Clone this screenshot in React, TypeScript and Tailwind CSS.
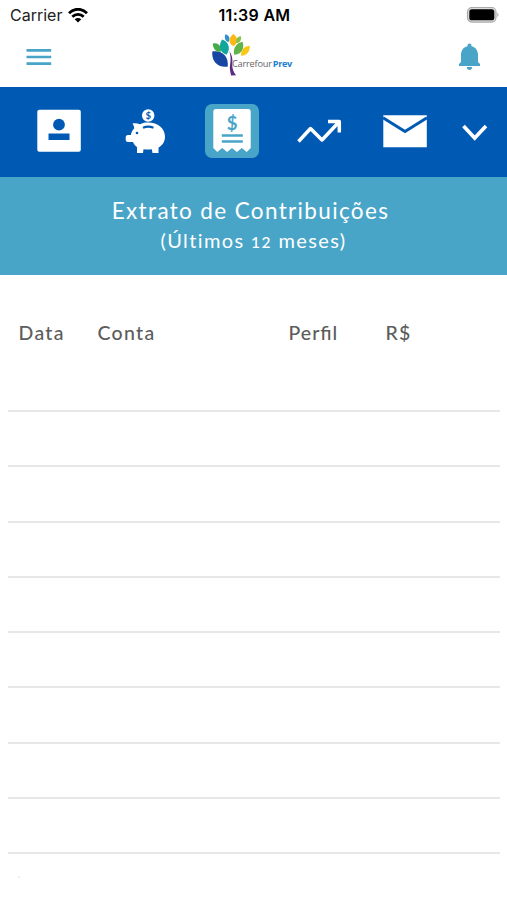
import React from "react";

function StatusBar() {
  return (
    <div className="grid h-[30px] grid-cols-3 items-center pl-[10px] pr-[8px] font-['Inter',sans-serif] text-[#222]">
      <div className="flex items-center gap-[6px]">
        <span className="text-[16px] leading-[30px]">Carrier</span>
        <svg width="20" height="15" viewBox="0 0 20 15" fill="none" stroke="#000" strokeWidth="2.8">
          <path d="M1 5.2C6-.1 14-.1 19 5.2" />
          <path d="M4.3 8.8c3.3-3.2 8.1-3.2 11.4 0" />
          <path d="M6.7 11.2c1.9-1.7 4.7-1.7 6.6 0L10 14.5z" fill="#000" stroke="none" />
        </svg>
      </div>
      <span className="whitespace-nowrap text-center text-[16px] font-semibold leading-[30px] tracking-[0.3px] text-black">11:39 AM</span>
      <svg className="justify-self-end" width="33" height="16" viewBox="0 0 33 16">
        <rect x="1.5" y="0.5" width="28.5" height="14.6" rx="4.5" fill="#ddd" stroke="#aaa" strokeWidth="1.2" />
        <rect x="3.3" y="2.3" width="25" height="11" rx="2.6" fill="#000" />
        <path d="M31.3 5.5c1.6.7 1.6 3.9 0 4.6z" fill="#aaa" />
      </svg>
    </div>
  );
}

function Logo() {
  return (
    <svg width="84" height="45" viewBox="0 0 84 45">
      <path d="M.3 17.500C5 16.500 10 18 13 21.500c2.500 3 3 6.800 2.800 11C11 33.300 6 32 3.200 28.500.6 25.300 0 21.500.3 17.500z" fill="#1746a2" />
      <path d="M.8 9.500c3.200-.8 6.200.5 7.500 3 .8 1.700.8 3.400.5 5.300C4.500 18.300 1 15.500.8 9.500z" fill="#45ad48" />
      <path d="M10.200 5.500c4.600 1.500 7.200 5.500 6.600 9.800-.3 2.200-1.200 4-2.300 5.400-4.500-1.700-6.900-5-6.500-9 .2-2.600 1-4.700 2.200-6.200z" fill="#12a59b" />
      <path d="M13.500.3c2.600.7 4.200 2.500 4 4.700-.1 1.200-.5 2.200-1.200 3.200C13.200 7 12 3.700 13.500.3z" fill="#2b91d0" />
      <path d="M21.500 0c2.400 2 3.900 4.200 3.600 6.900-.2 2.300-1.700 4-3.700 5.100-2.600-1.200-4.200-3.200-4-5.700C17.600 3.700 19.300 1.700 21.500 0z" fill="#fcb817" />
      <path d="M29 2.200c.6 3.900-.9 6.700-4.700 6.800-.5-3.700.9-6.700 4.700-6.800z" fill="#8bc34a" />
      <path d="M30.500 7.800c1.300 3.400 1.200 7.200-1.300 10-1.700 1.900-4.400 3-7 3-.8-3.500-.3-6.800 1.900-9.400 1.600-1.900 4-3.200 6.400-3.600z" fill="#60b449" />
      <path d="M37.800 11.700c.2 5.800-3 9.900-8.700 10-.3-5.700 2.900-9.700 8.700-10z" fill="#f8c814" />
      <path d="M17.300 17c1.400 4.500 1.700 8.500.8 13.500-.7 4 .2 7.500 1 11l5-.3c-2.800-3.200-4.200-7.200-3.800-11.700.4-4.800-.2-8.700-3-12.500z" fill="#5c2c83" />
      <text x="20" y="32.500" fontFamily="Open Sans, sans-serif" fontSize="9.200" fill="#666" textLength="40" lengthAdjust="spacing">Carrefour</text>
      <text x="60.800" y="32.500" fontFamily="Open Sans, sans-serif" fontSize="9.200" fontWeight="700" fill="#2580cb" textLength="19.500" lengthAdjust="spacing">Prev</text>
    </svg>
  );
}

function Header() {
  return (
    <header className="flex h-[57px] items-start justify-between px-[26px]">
      <svg className="mt-[18px]" width="26" height="19" viewBox="0 0 26 19" stroke="#49a5c8" strokeWidth="2.7">
        <path d="M.5 2.300h24.700M.5 9h24.700M.5 15.700h24.700" />
      </svg>
      <div className="mr-[2px] mt-[4px]"><Logo /></div>
      <svg className="mt-[13px]" width="23" height="28" viewBox="0 0 23 28" fill="#49a5c8">
        <path d="M9.500 3.200V2.500a2 2 0 0 1 4 0v.7c4.500 1 6.500 4.500 6.500 8.800v7l2 2v2H1v-2l2-2v-7c0-4.300 2-7.800 6.500-8.800zM8.800 24h5.400c0 4-5.400 4-5.400 0z" />
      </svg>
    </header>
  );
}

function NavBar() {
  return (
    <nav className="flex h-[90px] items-center bg-[#005ab3] pb-[2px] pl-[37px] text-white">
      <svg width="44" height="44" viewBox="0 0 44 44">
        <rect x="0.3" y="0.7" width="43.5" height="42" rx="2" fill="#fff" />
        <circle cx="22" cy="15.700" r="5.900" fill="#005ab3" />
        <path d="M11.500 24.500h21V31h-21z" fill="#005ab3" />
      </svg>
      <svg className="ml-[44px]" width="41" height="45" viewBox="0 0 41 45" fill="#fff">
        <circle cx="23.200" cy="6.500" r="6.200" />
        <path d="M7.500 14.500c3-.5 5.500 0 7.500.8 2.500-1.400 5-1.800 8-1.800 10 0 17 6 17 14.200 0 5.200-2.500 8.500-6.500 10.800V44h-6l-.7-3.700c-2.800.4-5.500.4-8.300 0L18 44h-6v-6c-2-1.200-3.200-2.900-4-5H2.800C1.500 33 .7 32 .7 30.500v-2c0-1.500.8-2.500 2.200-2.500h3c.4-2.700 1.600-5 3.400-6.800-.2-1.700-.8-3.200-1.800-4.700z" />
        <path d="M18 18.700c3.300-1.300 7.200-1.300 10.500 0" fill="none" stroke="#005ab3" strokeWidth="2.200" />
        <circle cx="12" cy="24" r="1.300" fill="#005ab3" />
        <text x="23.200" y="9.900" textAnchor="middle" fontFamily="Lato, sans-serif" fontSize="9.500" fontWeight="700" fill="#005ab3">$</text>
      </svg>
      <div className="ml-[39px] flex h-[54px] w-[54px] items-center justify-center rounded-[7px] bg-[#49a5c8]">
        <svg width="40" height="46" viewBox="0 0 40 46">
          <path d="M4 1h32a2.700 2.700 0 0 1 2.700 2.700V40l-4 4-4.900-4-4.900 4-4.900-4-4.900 4-4.900-4-4.900 4L1.300 40V3.700A2.700 2.700 0 0 1 4 1z" fill="#fff" />
          <path d="M9.800 27.500h21M9.800 33.500h21" stroke="#49a5c8" strokeWidth="2.500" />
          <text x="20" y="21.500" textAnchor="middle" fontFamily="Lato, sans-serif" fontSize="18.500" fontWeight="700" fill="#49a5c8">$</text>
        </svg>
      </div>
      <svg className="ml-[38px]" width="45" height="26" viewBox="0 0 45 26" fill="none" stroke="#fff" strokeWidth="3.5">
        <path d="M1.500 23.500l12-13L25 22 41.500 4.500M31 3.500h11.300v11" strokeLinejoin="round" />
      </svg>
      <svg className="ml-[41px]" width="45" height="34" viewBox="0 0 45 34">
        <path d="M.3 1.300h43.500v32H.3z" fill="#fff" />
        <path d="M0 3.800L22 17.500l22-13.700" fill="none" stroke="#005ab3" strokeWidth="3" />
      </svg>
      <svg className="ml-[34px] mt-[4px]" width="26" height="20" viewBox="0 0 26 20" fill="none" stroke="#fff" strokeWidth="3.600">
        <path d="M1.500 3l11.200 12L24 3" />
      </svg>
    </nav>
  );
}

function Title() {
  return (
    <section className="flex h-[98px] flex-col items-center bg-[#49a5c8] pt-[19px] font-['Lato',sans-serif] text-white">
      <h1 className="mr-[6px] whitespace-nowrap text-[22.5px] leading-[30px] tracking-[1.35px]">Extrato de Contribuições</h1>
      <p className="-mt-[1px] whitespace-nowrap text-[20px] leading-[30px] tracking-[1.4px]">
        (Últimos <span className="text-[15.5px] font-medium">12</span> meses)
      </p>
    </section>
  );
}

const rows = Array.from({ length: 8 });

function Contributions() {
  return (
    <main className="mt-[20px] pl-[8px] pr-[7px]">
      <div className="grid h-[117px] grid-cols-[79px_191px_97px_1fr] border-b-2 border-[#e7e7e7] pl-[10.5px] pt-[22.5px] font-['Lato',sans-serif] text-[19.5px] font-medium leading-[30px] tracking-[1.3px] text-[#5c5c5c]">
        <span>Data</span>
        <span>Conta</span>
        <span className="tracking-[1px] [font-feature-settings:'liga']">Perfil</span>
        <span>R$</span>
      </div>
      {rows.map((_, i) => (
        <div key={i} className="h-[55.3px] border-b-2 border-[#e7e7e7]" />
      ))}
      <div className="ml-[10px] mt-[22px] h-[2px] w-[2px] bg-[#f1f1f1]" />
    </main>
  );
}

export default function App() {
  return (
    <div className="h-[900px] w-[507px] overflow-hidden bg-white">
      <StatusBar />
      <Header />
      <NavBar />
      <Title />
      <Contributions />
    </div>
  );
}
